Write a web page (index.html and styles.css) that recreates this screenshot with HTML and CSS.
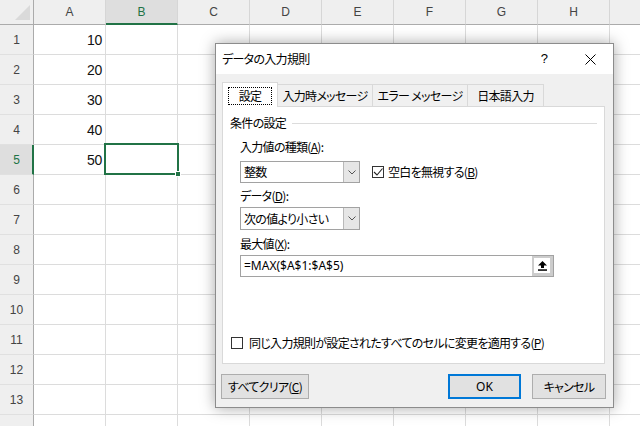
FILE: index.html
```html
<!DOCTYPE html>
<html lang="ja">
<head>
<meta charset="utf-8">
<title>データの入力規則</title>
<link rel="stylesheet" href="styles.css">
</head>
<body>
<div class="sheet">
  <div class="corner"><span class="tri"></span></div>
  <div class="ch">A</div><div class="ch sel">B</div><div class="ch">C</div><div class="ch">D</div><div class="ch">E</div><div class="ch">F</div><div class="ch">G</div><div class="ch">H</div><div class="ch"></div>

  <div class="rh">1</div><div class="c num">10</div><div class="c"></div><div class="c"></div><div class="c"></div><div class="c"></div><div class="c"></div><div class="c"></div><div class="c"></div><div class="c"></div>
  <div class="rh">2</div><div class="c num">20</div><div class="c"></div><div class="c"></div><div class="c"></div><div class="c"></div><div class="c"></div><div class="c"></div><div class="c"></div><div class="c"></div>
  <div class="rh">3</div><div class="c num">30</div><div class="c"></div><div class="c"></div><div class="c"></div><div class="c"></div><div class="c"></div><div class="c"></div><div class="c"></div><div class="c"></div>
  <div class="rh">4</div><div class="c num">40</div><div class="c"></div><div class="c"></div><div class="c"></div><div class="c"></div><div class="c"></div><div class="c"></div><div class="c"></div><div class="c"></div>
  <div class="rh sel">5</div><div class="c num">50</div><div class="c active"><span class="selbox"><span class="handle"></span></span></div><div class="c"></div><div class="c"></div><div class="c"></div><div class="c"></div><div class="c"></div><div class="c"></div><div class="c"></div>
  <div class="rh">6</div><div class="c"></div><div class="c"></div><div class="c"></div><div class="c"></div><div class="c"></div><div class="c"></div><div class="c"></div><div class="c"></div><div class="c"></div>
  <div class="rh">7</div><div class="c"></div><div class="c"></div><div class="c"></div><div class="c"></div><div class="c"></div><div class="c"></div><div class="c"></div><div class="c"></div><div class="c"></div>
  <div class="rh">8</div><div class="c"></div><div class="c"></div><div class="c"></div><div class="c"></div><div class="c"></div><div class="c"></div><div class="c"></div><div class="c"></div><div class="c"></div>
  <div class="rh">9</div><div class="c"></div><div class="c"></div><div class="c"></div><div class="c"></div><div class="c"></div><div class="c"></div><div class="c"></div><div class="c"></div><div class="c"></div>
  <div class="rh">10</div><div class="c"></div><div class="c"></div><div class="c"></div><div class="c"></div><div class="c"></div><div class="c"></div><div class="c"></div><div class="c"></div><div class="c"></div>
  <div class="rh">11</div><div class="c"></div><div class="c"></div><div class="c"></div><div class="c"></div><div class="c"></div><div class="c"></div><div class="c"></div><div class="c"></div><div class="c"></div>
  <div class="rh">12</div><div class="c"></div><div class="c"></div><div class="c"></div><div class="c"></div><div class="c"></div><div class="c"></div><div class="c"></div><div class="c"></div><div class="c"></div>
  <div class="rh">13</div><div class="c"></div><div class="c"></div><div class="c"></div><div class="c"></div><div class="c"></div><div class="c"></div><div class="c"></div><div class="c"></div><div class="c"></div>
  <div class="rh"></div><div class="c"></div><div class="c"></div><div class="c"></div><div class="c"></div><div class="c"></div><div class="c"></div><div class="c"></div><div class="c"></div><div class="c"></div>
</div>

<div class="dlg">
  <div class="titlebar">
    <span class="title">データの入力規則</span>
    <span class="help">?</span>
    <span class="close"><svg width="11" height="11" viewBox="0 0 11 11"><path d="M0.5 0.5 L10.5 10.5 M10.5 0.5 L0.5 10.5" stroke="#000" stroke-width="1" fill="none"/></svg></span>
  </div>
  <div class="body">
    <div class="tabs">
      <div class="tab on"><span class="focus">設定</span></div>
      <div class="tab w96">入力時メッセージ</div>
      <div class="tab w96">エラー メッセージ</div>
      <div class="tab w77">日本語入力</div>
    </div>
    <div class="panel">
      <div class="legend"><span>条件の設定</span><span class="rule"></span></div>
      <div class="form">
        <div class="lbl l1">入力値の種類(<u>A</u>):</div>
        <div class="row1">
          <div class="combo"><span class="val">整数</span><span class="drop"><svg width="8" height="5" viewBox="0 0 8 5"><path d="M0.5 0.5 L4 4 L7.5 0.5" stroke="#555" fill="none"/></svg></span></div>
          <label class="chk"><span class="box"><svg width="10" height="10" viewBox="0 0 10 10"><path d="M1 5 L4 8 L9.5 1.5" stroke="#222" stroke-width="1.1" fill="none"/></svg></span>空白を無視する(<u>B</u>)</label>
        </div>
        <div class="lbl l2">データ(<u>D</u>):</div>
        <div class="combo c2"><span class="val">次の値より小さい</span><span class="drop"><svg width="8" height="5" viewBox="0 0 8 5"><path d="M0.5 0.5 L4 4 L7.5 0.5" stroke="#555" fill="none"/></svg></span></div>
        <div class="lbl l3">最大値(<u>X</u>):</div>
        <div class="refedit"><span class="formula">=MAX($A$1:$A$5)</span><span class="refbtn"><span class="refin"><svg width="9" height="10" viewBox="0 0 9 10"><path d="M4.5 0 L9 4.5 L6 4.5 L6 7 L3 7 L3 4.5 L0 4.5 Z" fill="#000"/><rect x="0" y="8.3" width="9" height="1.5" fill="#000"/></svg></span></span></div>
      </div>
      <label class="chk all"><span class="box"></span>同じ入力規則が設定されたすべてのセルに変更を適用する(<u>P</u>)</label>
    </div>
    <div class="buttons">
      <button class="btn clear">すべてクリア(<u>C</u>)</button>
      <span class="spacer"></span>
      <button class="btn ok">OK</button>
      <button class="btn cancel">キャンセル</button>
    </div>
  </div>
</div>
</body>
</html>
```

FILE: styles.css
```css
* { box-sizing: border-box; }
html, body { margin: 0; width: 640px; height: 426px; overflow: hidden; background: #fff; }
body { position: relative; font-family: "Noto Sans CJK JP", sans-serif; }

/* spreadsheet */
.sheet {
  width: 640px; height: 426px; overflow: hidden;
  display: grid;
  grid-template-columns: 34px repeat(9, 72px);
  grid-template-rows: 25px repeat(14, 30px);
  font-family: "Liberation Sans", "Noto Sans CJK JP", sans-serif;
}
.corner { background: #efefef; border-right: 1px solid #ababab; border-bottom: 1px solid #ababab; display: flex; justify-content: flex-end; align-items: flex-end; padding: 0 3px 4px 0; }
.tri { width: 0; height: 0; border-left: 15px solid transparent; border-bottom: 15px solid #dadada; }
.ch {
  background: #efefef; border-right: 1px solid #d6d6d6; border-bottom: 1px solid #ababab;
  display: flex; align-items: center; justify-content: center;
  font-size: 12px; color: #444;
}
.ch.sel { background: #dedede; color: #217346; border-bottom: 2px solid #217346; padding-top: 1px; }
.rh {
  background: #efefef; border-right: 1px solid #ababab; border-bottom: 1px solid #e0e0e0;
  display: flex; align-items: center; justify-content: center;
  font-size: 12px; color: #444;
}
.rh.sel { background: #dedede; color: #217346; border-right: 2px solid #217346; padding-left: 1px; }
.c { border-right: 1px solid #dcdcdc; border-bottom: 1px solid #dcdcdc; }
.num { display: flex; align-items: center; justify-content: flex-end; padding-right: 3px; font-size: 14px; color: #111; letter-spacing: -0.3px; }
.active { position: relative; }
.selbox { position: absolute; left: -2px; top: -2px; right: -2px; bottom: -1px; border: 2px solid #217346; }
.handle { position: absolute; right: -4px; bottom: -4px; width: 6px; height: 6px; background: #217346; border: 1px solid #fff; }

/* dialog */
.dlg {
  position: absolute; left: 215px; top: 43px; width: 399px; height: 365px;
  background: #f0f0f0; border: 1px solid #8c8c8c;
  box-shadow: 0 0 14px rgba(0,0,0,0.35);
  display: flex; flex-direction: column;
  font-size: 12px; color: #000; font-feature-settings: "palt"; letter-spacing: -0.7px;
}
.titlebar { height: 30px; background: #fff; display: flex; align-items: center; padding-left: 6px; line-height: 16px; }
.title { flex: 1; }
.help { width: 46px; text-align: center; font-family: "Liberation Sans", sans-serif; font-size: 13px; }
.close { width: 46px; display: flex; justify-content: center; align-items: center; }
.body { padding: 8px 8px 0 6px; display: flex; flex-direction: column; }
.tabs { display: flex; align-items: flex-end; height: 25px; position: relative; z-index: 1; margin-bottom: -1px; }
.tab {
  height: 22px; border: 1px solid #d9d9d9; border-bottom: none; background: #f0f0f0;
  display: flex; align-items: center; justify-content: center; white-space: nowrap;
  margin-left: -1px; line-height: 16px; margin-bottom: 1px;
}
.tab.on { width: 56px; height: 25px; margin-left: 0; margin-bottom: 0; background: #fff; padding-top: 1px; }
.focus { border: 1px dotted #000; padding: 0 10px; line-height: 16px; }
.w96 { width: 96px; }
.w77 { width: 77px; }
.panel { height: 258px; background: #fff; border: 1px solid #d9d9d9; display: flex; flex-direction: column; }
.legend { margin-top: 8px; padding-left: 7px; display: flex; align-items: center; line-height: 16px; }
.rule { flex: 1; border-top: 1px solid #dcdcdc; margin: 1px 7px 0 6px; }
.form { padding-left: 17px; display: flex; flex-direction: column; align-items: flex-start; }
.lbl { line-height: 16px; }
.l1 { margin-top: 8px; }
.l2 { margin-top: 5px; }
.l3 { margin-top: 6px; }
.row1 { margin-top: 6px; display: flex; align-items: center; }
.combo { width: 120px; height: 22px; border: 1px solid #a2a2a2; display: flex; background: #fff; }
.combo .val { flex: 1; padding-left: 3px; line-height: 20px; }
.drop { width: 16px; background: #e6e6e6; border-left: 1px solid #b9b9b9; display: flex; align-items: center; justify-content: center; }
.c2 { margin-top: 3px; height: 23px; }
.c2 .val { line-height: 21px; }
.chk { display: flex; align-items: center; line-height: 16px; }
.row1 .chk { margin-left: 12px; }
.box { width: 12px; height: 12px; border: 1px solid #333; margin-right: 4px; display: flex; align-items: center; justify-content: center; background: #fff; }
.refedit { margin-top: 3px; width: 314px; height: 22px; border: 1px solid #a2a2a2; display: flex; }
.formula { flex: 1; padding-left: 3px; line-height: 20px; font-family: "Noto Sans", "Liberation Sans", sans-serif; font-size: 12px; letter-spacing: 0; }
.refbtn { width: 21px; background: #cccccc; padding: 2px 3px 3px 2px; display: flex; }
.refin { flex: 1; background: #fff; display: flex; align-items: center; justify-content: center; }
.all { margin-top: auto; margin-bottom: 12px; padding-left: 8px; }
.all .box { margin-right: 6px; }
.buttons { display: flex; margin-top: 10px; }
.btn {
  height: 25px; background: #e1e1e1; border: 1px solid #adadad; font: inherit; font-size: 12px;
  padding: 0; color: #000; line-height: 16px; font-feature-settings: "palt"; letter-spacing: -0.7px;
}
.clear { width: 88px; margin-left: -1px; }
.spacer { flex: 1; }
.ok { width: 73px; border: 2px solid #0078d7; font-family: "Noto Sans", sans-serif; letter-spacing: 0; }
.cancel { width: 74px; margin-left: 11px; margin-right: -1px; }
```
